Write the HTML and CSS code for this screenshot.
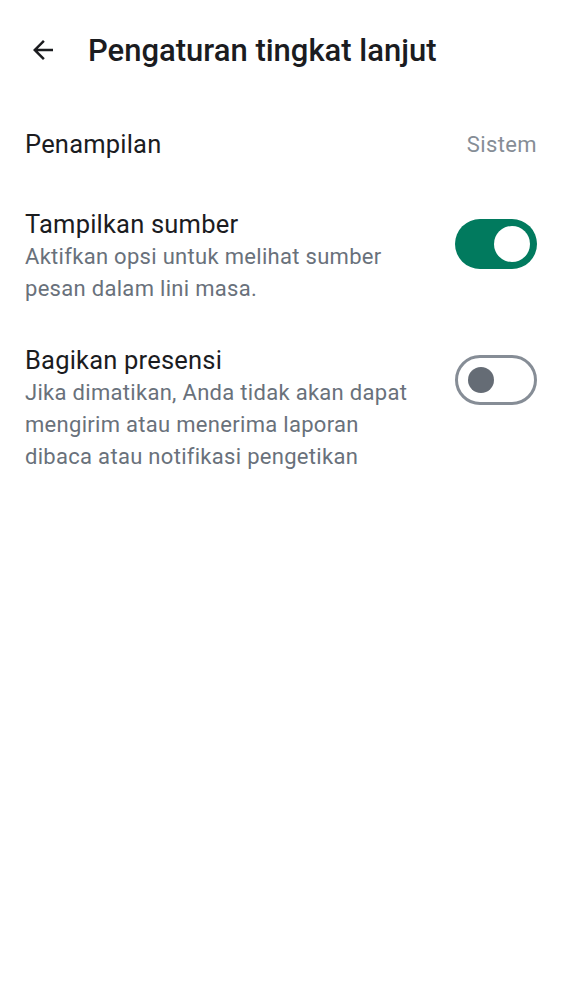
FILE: index.html
```html
<!DOCTYPE html>
<html lang="id">
<head>
<meta charset="utf-8">
<link rel="stylesheet" href="styles.css">
</head>
<body>
<header class="topbar">
  <button class="back" aria-label="Kembali">
    <svg width="30" height="30" viewBox="0 0 24 24"><path d="M20 11H7.83l5.59-5.59L12 4l-8 8 8 8 1.41-1.41L7.83 13H20v-2z" fill="#1b1c1f"/></svg>
  </button>
  <h1 class="title">Pengaturan tingkat lanjut</h1>
</header>
<main class="list">
  <div class="row row-simple">
    <div class="label">Penampilan</div>
    <div class="value">Sistem</div>
  </div>
  <div class="row">
    <div class="text">
      <div class="label">Tampilkan sumber</div>
      <div class="desc">Aktifkan opsi untuk melihat sumber pesan dalam lini masa.</div>
    </div>
    <div class="switch on"><span class="knob"></span></div>
  </div>
  <div class="row">
    <div class="text">
      <div class="label">Bagikan presensi</div>
      <div class="desc">Jika dimatikan, Anda tidak akan dapat mengirim atau menerima laporan dibaca atau notifikasi pengetikan</div>
    </div>
    <div class="switch off"><span class="knob"></span></div>
  </div>
</main>
</body>
</html>
```

FILE: styles.css
```css
* { box-sizing: border-box; }
body {
  margin: 0;
  background: #fff;
  font-family: Roboto, "Noto Sans", sans-serif;
  color: #1b1c1f;
}
.topbar {
  display: flex;
  align-items: center;
  height: 100px;
  padding: 0 0 0 28px;
}
.back {
  border: 0;
  background: none;
  padding: 0;
  width: 30px;
  height: 30px;
  display: flex;
  align-items: center;
  justify-content: center;
  margin-right: 30px;
}
.title {
  margin: 0;
  font-size: 31px;
  font-weight: 500;
  letter-spacing: 0;
}
.list {
  display: flex;
  flex-direction: column;
  padding: 0 25px;
}
.row {
  display: flex;
  align-items: flex-start;
  justify-content: space-between;
  padding: 21px 0 18px;
}
.row-simple {
  align-items: center;
  padding: 28px 0 27px;
}
.label {
  font-size: 25.5px;
  line-height: 32px;
  color: #1b1c1f;
  letter-spacing: 0.2px;
}
.value {
  font-size: 22px;
  color: #868d96;
  letter-spacing: 0.4px;
}
.text { width: 400px; }
.desc {
  padding-top: 1px;
  font-size: 22px;
  line-height: 32px;
  color: #69717b;
  letter-spacing: 0.3px;
}
.switch {
  flex: none;
  width: 82px;
  height: 50px;
  border-radius: 25px;
  margin-top: 11px;
  display: flex;
  align-items: center;
}
.switch.on {
  background: #017a5e;
  justify-content: flex-end;
  padding-right: 7px;
}
.switch.on .knob {
  width: 36px;
  height: 36px;
  border-radius: 50%;
  background: #fff;
}
.switch.off {
  border: 3px solid #868d96;
  padding-left: 10px;
}
.switch.off .knob {
  width: 26px;
  height: 26px;
  border-radius: 50%;
  background: #656c75;
}
```
